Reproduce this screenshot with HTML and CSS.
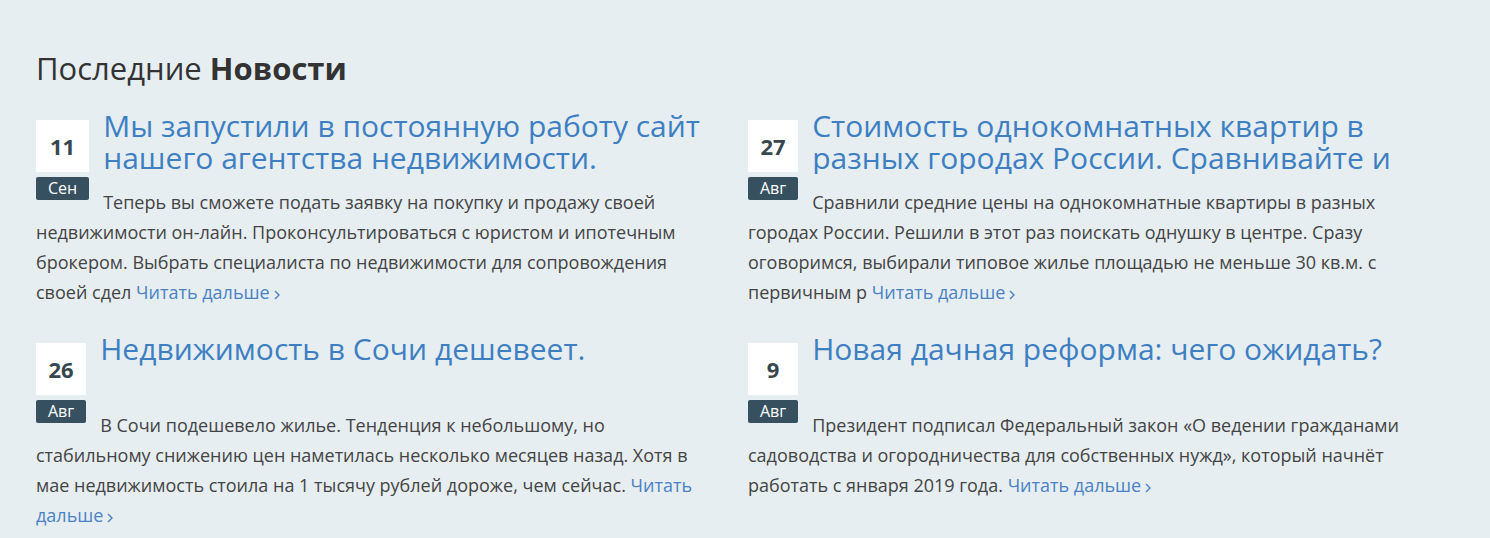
FILE: index.html
```html
<!DOCTYPE html>
<html lang="ru">
<head>
<meta charset="utf-8">
<title>Последние Новости</title>
<link rel="stylesheet" href="styles.css">
</head>
<body>
<section class="news">
  <h2 class="news-heading">Последние <b>Новости</b></h2>
  <div class="news-grid">
    <article class="card">
      <div class="date"><div class="day">11</div><div class="month">Сен</div></div>
      <h3 class="title"><a href="#">Мы запустили в постоянную работу сайт нашего агентства недвижимости.</a></h3>
      <p class="text">Теперь вы сможете подать заявку на покупку и продажу своей недвижимости он-лайн. Проконсультироваться с юристом и ипотечным брокером. Выбрать специалиста по недвижимости для сопровождения своей сдел <a class="more" href="#">Читать дальше<svg class="chev" viewBox="0 0 6 10" width="6" height="10"><path d="M1 1l4 4-4 4" fill="none" stroke="currentColor" stroke-width="1.4"/></svg></a></p>
    </article>
    <article class="card">
      <div class="date"><div class="day">27</div><div class="month">Авг</div></div>
      <h3 class="title"><a href="#">Стоимость однокомнатных квартир в разных городах России. Сравнивайте и выбирайте</a></h3>
      <p class="text">Сравнили средние цены на однокомнатные квартиры в разных городах России. Решили в этот раз поискать однушку в центре. Сразу оговоримся, выбирали типовое жилье площадью не меньше 30 кв.м. с первичным р <a class="more" href="#">Читать дальше<svg class="chev" viewBox="0 0 6 10" width="6" height="10"><path d="M1 1l4 4-4 4" fill="none" stroke="currentColor" stroke-width="1.4"/></svg></a></p>
    </article>
    <article class="card">
      <div class="date"><div class="day">26</div><div class="month">Авг</div></div>
      <h3 class="title"><a href="#">Недвижимость в Сочи дешевеет.</a></h3>
      <p class="text">В Сочи подешевело жилье. Тенденция к небольшому, но стабильному снижению цен наметилась несколько месяцев назад. Хотя в мае недвижимость стоила на 1 тысячу рублей дороже, чем сейчас. <a class="more" href="#">Читать дальше<svg class="chev" viewBox="0 0 6 10" width="6" height="10"><path d="M1 1l4 4-4 4" fill="none" stroke="currentColor" stroke-width="1.4"/></svg></a></p>
    </article>
    <article class="card">
      <div class="date"><div class="day">9</div><div class="month">Авг</div></div>
      <h3 class="title"><a href="#">Новая дачная реформа: чего ожидать?</a></h3>
      <p class="text">Президент подписал Федеральный закон «О ведении гражданами садоводства и огородничества для собственных нужд», который начнёт работать с января 2019 года. <a class="more" href="#">Читать дальше<svg class="chev" viewBox="0 0 6 10" width="6" height="10"><path d="M1 1l4 4-4 4" fill="none" stroke="currentColor" stroke-width="1.4"/></svg></a></p>
    </article>
  </div>
</section>
</body>
</html>
```

FILE: styles.css
```css
* { box-sizing: border-box; }
html, body {
  margin: 0;
  background: #e6eef2;
}
body {
  font-family: "Open Sans", "Noto Sans", sans-serif;
  color: #444;
}
.news {
  padding: 49px 36px 0 36px;
}
.news-heading {
  margin: 0 0 23px 0;
  font-size: 31px;
  line-height: 38px;
  font-weight: 400;
  color: #333;
}
.news-heading b {
  font-weight: 700;
}
.news-grid {
  display: grid;
  grid-template-columns: 680px 680px;
  column-gap: 32px;
  row-gap: 26px;
}
.card {
  min-width: 0;
}
.date {
  float: left;
  margin: 10px 14px 8px 0;
}
.day {
  height: 52px;
  background: #fff;
  display: flex;
  align-items: center;
  justify-content: center;
  font-size: 22px;
  font-weight: 700;
  color: #37474f;
}
.month {
  margin-top: 5px;
  height: 23px;
  padding: 0 12px;
  background: #37505f;
  color: #fff;
  border-radius: 2px;
  font-size: 16px;
  line-height: 22px;
  text-align: center;
  white-space: nowrap;
}
.title {
  margin: 0 0 13px 0;
  height: 64px;
  overflow: hidden;
  font-size: 30px;
  line-height: 32px;
  font-weight: 400;
}
.title a {
  color: #3e7fc2;
  text-decoration: none;
}
.text {
  margin: 0;
  font-size: 18px;
  line-height: 30px;
  color: #444;
}
.more {
  color: #4a82c4;
  text-decoration: none;
}
.chev {
  margin-left: 4px;
  vertical-align: -1px;
}
```
